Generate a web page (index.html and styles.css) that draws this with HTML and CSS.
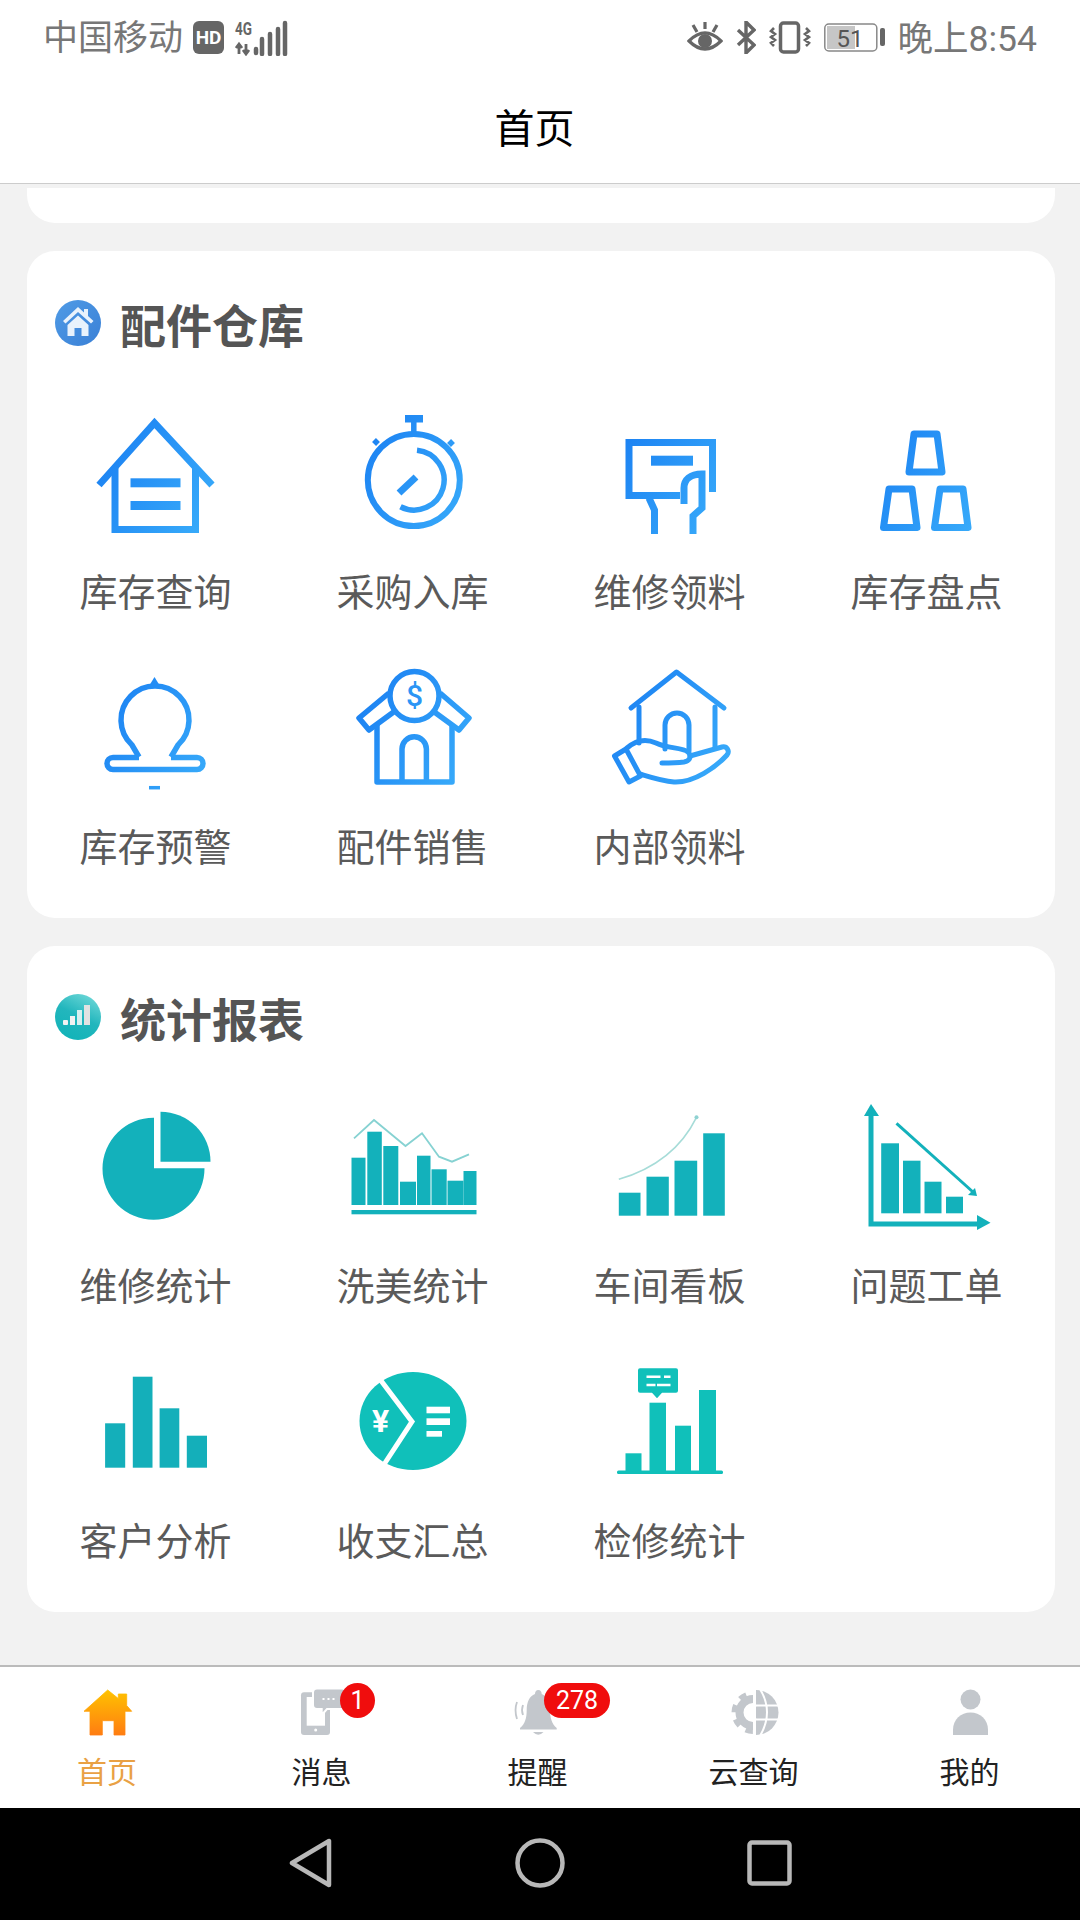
FILE: index.html
```html
<!DOCTYPE html>
<html lang="zh-CN">
<head>
  <meta charset="UTF-8">
  <title>首页</title>
  <link rel="stylesheet" href="styles.css">
</head>
<body>
  <div id="status-bar">
    <div class="status-group">
      <span class="carrier">中国移动</span>
      <span class="hd">HD</span>
      <svg class="signal" width="55" height="36" viewBox="0 0 55 36">
        <text x="1" y="15" class="net-text" textLength="17" lengthAdjust="spacingAndGlyphs">4G</text>
        <path d="M5 34V24M2 28l3-4 3 4M12 24v10M9 30l3 4 3-4" fill="none" stroke="#666" stroke-width="2.800"/>
        <path d="M22 29v4M28 19v15M36 14v20M44 9v25M51 3v31" fill="none" stroke="#666" stroke-width="4.500" stroke-linecap="round"/>
      </svg>
    </div>
    <div class="status-group status-right">
      <svg width="36" height="31" viewBox="0 0 36 31" fill="none" stroke="#666" stroke-width="3.200">
        <path d="M2 19Q18 3 34 19Q18 35 2 19Z"/>
        <circle cx="18" cy="19" r="7" fill="#666" stroke="none"/>
        <path d="M18 0v7M6 3l4 7M30 3l-4 7"/>
      </svg>
      <svg width="20" height="33" viewBox="0 0 20 33" fill="none" stroke="#666" stroke-width="3.400">
        <path d="M2 9L18 24L10 32V1L18 9L2 24"/>
      </svg>
      <svg width="42" height="33" viewBox="0 0 42 33" fill="none" stroke="#666">
        <rect x="11.500" y="2" width="18" height="29" rx="3" stroke-width="3.500"/>
        <path d="M5 7l-3 3 4 3-4 3 4 3-4 3 3 3M37 7l3 3-4 3 4 3-4 3 4 3-3 3" stroke-width="2.600"/>
      </svg>
      <svg width="61" height="30" viewBox="0 0 61 30">
        <rect x="0.800" y="1" width="52" height="27" rx="4" fill="none" stroke="#888" stroke-width="1.500"/>
        <rect x="3" y="3" width="28" height="23" fill="#c6c6c6"/>
        <text x="26" y="23.500" class="battery-text">51</text>
        <rect x="56" y="5" width="5" height="18" rx="2" fill="#666"/>
      </svg>
      <span class="clock">晚上8:54</span>
    </div>
  </div>

  <header id="title-bar">首页</header>

  <main id="content">
    <div class="card card-stub"></div>

    <section class="card">
      <div class="card-head">
        <svg class="head-icon" width="46" height="46" viewBox="0 0 46 46">
          <defs>
            <linearGradient id="blue" gradientUnits="userSpaceOnUse" x1="20" y1="30" x2="140" y2="100">
              <stop offset="0" stop-color="#1a7ff2"/>
              <stop offset="1" stop-color="#38abfa"/>
            </linearGradient>
            <linearGradient id="head-blue" x1="0" y1="0" x2="1" y2="1">
              <stop offset="0" stop-color="#4f9be6"/>
              <stop offset="1" stop-color="#3a80d6"/>
            </linearGradient>
            <linearGradient id="head-teal" x1="0.800" y1="0" x2="0.300" y2="1">
              <stop offset="0" stop-color="#6fd8d8"/>
              <stop offset="0.500" stop-color="#22b6bd"/>
              <stop offset="1" stop-color="#12b3b8"/>
            </linearGradient>
            <linearGradient id="home-orange" x1="0" y1="0" x2="0" y2="1">
              <stop offset="0" stop-color="#ffc200"/>
              <stop offset="1" stop-color="#ff7d12"/>
            </linearGradient>
            <clipPath id="gear-clip"><rect x="0" y="0" width="32" height="60"/></clipPath>
          </defs>
          <ellipse cx="23" cy="23" rx="23" ry="23" fill="url(#head-blue)"/>
          <path d="M23 7L8 21l2.500 2.500L23 12l13 11.500L38.500 21L33 16V9h-4v3.500Z" fill="#e8f2fc"/>
          <path d="M12.500 25L23 15.500L33.500 25V36h-7v-8h-7v8h-7Z" fill="#e8f2fc"/>
        </svg>
        <h2 class="card-title">配件仓库</h2>
      </div>
      <div class="grid">
        <div class="cell">
          <svg class="cell-icon" viewBox="0 0 160 130" fill="none" stroke="url(#blue)" stroke-width="7">
            <path d="M23 75L78.500 13L136 75"/>
            <path d="M39 58V119.500H119.500V58"/>
            <rect x="54.500" y="68.300" width="50" height="9" fill="url(#blue)" stroke="none"/>
            <rect x="54.500" y="91" width="50" height="9" fill="url(#blue)" stroke="none"/>
          </svg>
          <span class="cell-label">库存查询</span>
        </div>
        <div class="cell">
          <svg class="cell-icon" viewBox="0 0 160 130" fill="none" stroke="url(#blue)" stroke-width="6">
            <circle cx="80.800" cy="70" r="46"/>
            <rect x="72" y="5" width="18" height="7.500" fill="url(#blue)" stroke="none"/>
            <path d="M80.800 12v10M41 30l4 4M120 31l-4 4" stroke-width="5.500"/>
            <path d="M84 40.200A30 30 0 1 1 67.500 96.800" stroke-width="5.500"/>
            <path d="M83 67L66 83" stroke-width="7"/>
          </svg>
          <span class="cell-label">采购入库</span>
        </div>
        <div class="cell">
          <svg class="cell-icon" viewBox="0 0 160 130" fill="none" stroke="url(#blue)" stroke-width="7">
            <path d="M90 85.500H39V32.500H122.500V82"/>
            <rect x="61" y="45.700" width="42" height="10" fill="url(#blue)" stroke="none"/>
            <path d="M64.500 124V100L59 88"/>
            <path d="M103 124V106L112 98V64C100 64 94 70 94 78V94"/>
          </svg>
          <span class="cell-label">维修领料</span>
        </div>
        <div class="cell">
          <svg class="cell-icon" viewBox="0 0 160 130" fill="none" stroke="url(#blue)" stroke-width="7" stroke-linejoin="round">
            <path d="M67 24H90L95 62H62Z"/>
            <path d="M42 79H65L70 117.500H36.500Z"/>
            <path d="M93 79H116L121 117.500H87.500Z"/>
          </svg>
          <span class="cell-label">库存盘点</span>
        </div>
        <div class="cell">
          <svg class="cell-icon" viewBox="0 0 160 130" fill="none" stroke="url(#blue)" stroke-width="5.500">
            <path d="M63 92L56 80A34 34 0 1 1 102 80L95 92"/>
            <path d="M63 92.500H37a6 6 0 0 0 0 12H121a6 6 0 0 0 0-12H95"/>
            <path d="M73 21L78.500 12L84 21Z" fill="url(#blue)" stroke="none"/>
            <path d="M73 122.700H84" stroke-width="3.500"/>
          </svg>
          <span class="cell-label">库存预警</span>
        </div>
        <div class="cell">
          <svg class="cell-icon" viewBox="0 0 160 130" fill="none" stroke="url(#blue)" stroke-width="5.500" stroke-linejoin="round">
            <circle cx="81.500" cy="31" r="24.500"/>
            <text x="81.500" y="41" class="dollar-text">$</text>
            <path d="M56 28L26 53L36 65L62 46"/>
            <path d="M107 28L136 53L126 65L100 46"/>
            <path d="M44 60V117H119V60"/>
            <path d="M69 117V84a12.200 12.200 0 0 1 24.400 0V117"/>
          </svg>
          <span class="cell-label">配件销售</span>
        </div>
        <div class="cell">
          <svg class="cell-icon" viewBox="0 0 160 130" fill="none" stroke="url(#blue)" stroke-width="5" stroke-linejoin="round" stroke-linecap="round">
            <path d="M41 43L86.500 7L134 43"/>
            <path d="M49 42V78M125 42V82"/>
            <path d="M75 84V60a12 12 0 0 1 24 0V86"/>
            <path d="M24.500 91L39 117L50.500 111L36 84Z"/>
            <path d="M37 83C45 76 55 73 66 78C78 84 92 82 98 87C102 91 100 96 94 97C86 98 78 98 72 98"/>
            <path d="M100 91L132 82C137 81 140 86 137 90C126 102 104 118 84 117C72 116 60 112 50 109"/>
          </svg>
          <span class="cell-label">内部领料</span>
        </div>
      </div>
    </section>

    <section class="card">
      <div class="card-head card-head-tight">
        <svg class="head-icon" width="46" height="46" viewBox="0 0 46 46">
          <circle cx="23" cy="23" r="23" fill="url(#head-teal)"/>
          <g fill="#f2f2f2">
            <rect x="8" y="26" width="5" height="5" rx="1"/>
            <rect x="15" y="22" width="5" height="9"/>
            <rect x="22" y="16" width="5" height="15" fill="#d8f0f0"/>
            <rect x="29" y="11" width="6" height="20" fill="#e2e2e2"/>
          </g>
        </svg>
        <h2 class="card-title">统计报表</h2>
      </div>
      <div class="grid">
        <div class="cell">
          <svg class="cell-icon" viewBox="0 -1 160 130" fill="#13b1bb">
            <path d="M78 63.300V12.700A51 51 0 1 0 128.500 63.300Z"/>
            <path d="M84.500 56.700V6.700A50 50 0 0 1 134.500 56.700Z"/>
          </svg>
          <span class="cell-label">维修统计</span>
        </div>
        <div class="cell">
          <svg class="cell-icon" viewBox="0 -1 160 130" fill="#13b1bb">
            <rect x="18.500" y="52.700" width="14" height="47.300"/>
            <rect x="34.300" y="26.700" width="14.500" height="73.300"/>
            <rect x="50.300" y="41" width="15" height="59"/>
            <rect x="67" y="76.700" width="16" height="23.300"/>
            <rect x="84" y="50.700" width="13.500" height="49.300"/>
            <rect x="98.500" y="64.300" width="15.200" height="35.700"/>
            <rect x="114.500" y="75.700" width="16" height="24.300"/>
            <rect x="130.500" y="66" width="13" height="34"/>
            <rect x="18.500" y="105" width="125" height="4.300"/>
            <path d="M21 33.300L41 15L72.500 41L89 28.300L106 51.700L119 56.700L136 49.300" fill="none" stroke="#86d2d2" stroke-width="1.800"/>
          </svg>
          <span class="cell-label">洗美统计</span>
        </div>
        <div class="cell">
          <svg class="cell-icon" viewBox="0 -1 160 130" fill="#13b1bb">
            <rect x="28.800" y="87.700" width="21.700" height="23"/>
            <rect x="56.500" y="71.700" width="22.300" height="39"/>
            <rect x="84.500" y="55.700" width="22.700" height="55"/>
            <rect x="113.200" y="28.300" width="21.600" height="82.400"/>
            <path d="M28.800 74.300Q84 58 106.500 12.300" fill="none" stroke="#a6dcd8" stroke-width="1.600"/>
            <circle cx="106.500" cy="12.300" r="2" fill="#8fd2d2"/>
          </svg>
          <span class="cell-label">车间看板</span>
        </div>
        <div class="cell">
          <svg class="cell-icon" viewBox="0 -1 160 130" fill="#13b1bb">
            <path d="M24 9V119H135" fill="none" stroke="#13b1bb" stroke-width="5"/>
            <path d="M24-1L32 11H17Z"/>
            <path d="M143.500 117.700L130 125V110Z"/>
            <rect x="34.200" y="38.300" width="17.800" height="70"/>
            <rect x="56" y="55.700" width="17.500" height="52.600"/>
            <rect x="77.500" y="76.700" width="17" height="31.600"/>
            <rect x="99" y="91.700" width="17" height="16.600"/>
            <path d="M49.500 18.300L126 87" fill="none" stroke="#13b1bb" stroke-width="3"/>
            <path d="M130 91L121 90L128 83Z"/>
          </svg>
          <span class="cell-label">问题工单</span>
        </div>
        <div class="cell">
          <svg class="cell-icon" viewBox="0 -1 160 130" fill="#14afba">
            <rect x="29.100" y="63.300" width="20.100" height="44.400"/>
            <rect x="56.800" y="16.700" width="19.700" height="91"/>
            <rect x="83.600" y="48.300" width="19.700" height="59.400"/>
            <rect x="110.800" y="75.700" width="20.200" height="32"/>
          </svg>
          <span class="cell-label">客户分析</span>
        </div>
        <div class="cell">
          <svg class="cell-icon" viewBox="0 -1 160 130" fill="#10c0ba">
            <ellipse cx="80" cy="61" rx="53.500" ry="49"/>
            <path d="M46 18L79 61.700L50 106" fill="none" stroke="#fff" stroke-width="5"/>
            <text x="47.500" y="72" class="yen-text">¥</text>
            <g fill="#fff">
              <rect x="93.500" y="46.700" width="23.500" height="6.600"/>
              <rect x="93.500" y="58.300" width="23.500" height="6.700"/>
              <rect x="93.500" y="71" width="15.500" height="5.700"/>
            </g>
          </svg>
          <span class="cell-label">收支汇总</span>
        </div>
        <div class="cell">
          <svg class="cell-icon" viewBox="0 -1 160 130" fill="#10c0ba">
            <rect x="35.500" y="93.300" width="16" height="19"/>
            <rect x="59.500" y="42.700" width="16.500" height="69.300"/>
            <rect x="85" y="65.700" width="16" height="46.300"/>
            <rect x="109" y="30" width="17" height="82"/>
            <rect x="27" y="110.500" width="106" height="3.500" rx="1.500"/>
            <path d="M50 8.300H86a2 2 0 0 1 2 2V30.700a2 2 0 0 1-2 2H72L67 38.300L62 32.700H50a2 2 0 0 1-2-2V10.300a2 2 0 0 1 2-2Z"/>
            <path d="M56.500 16.700H70.500M74 16.700H80.500M56.500 25H65.500M67 25H80.500" fill="none" stroke="#fff" stroke-width="2.500"/>
          </svg>
          <span class="cell-label">检修统计</span>
        </div>
      </div>
    </section>
  </main>

  <nav id="tab-bar">
    <div class="tab active">
      <svg class="tab-icon" viewBox="0 0 70 60" fill="url(#home-orange)">
        <path d="M34.700 6L45.300 14.500V10H53.700V21.500L58.700 27.300H52V51H41V36.700H29.300V51H17V27.300H11Z" stroke="url(#home-orange)" stroke-width="0.800" stroke-linejoin="round"/>
      </svg>
      <span class="tab-label">首页</span>
    </div>
    <div class="tab">
      <svg class="tab-icon" viewBox="0 0 70 60" fill="#c3c7cc">
        <rect x="12" y="8.300" width="29" height="42.700" rx="3"/>
        <rect x="17.700" y="13" width="18.300" height="28.700" fill="#fff"/>
        <circle cx="26.700" cy="46" r="1.500" fill="#fff"/>
        <path d="M28 4.500H53a4 4 0 0 1 4 4V21a4 4 0 0 1-4 4H38L32.700 31V25H28a4 4 0 0 1-4-4V8.500a4 4 0 0 1 4-4Z" stroke="#fff" stroke-width="2"/>
        <path d="M33.500 15h2M38.500 15h2M43.500 15h2" stroke="#fff" stroke-width="2"/>
      </svg>
      <span class="tab-label">消息</span>
      <span class="badge">1</span>
    </div>
    <div class="tab">
      <svg class="tab-icon" viewBox="0 0 70 60" fill="#c3c7cc">
        <path d="M33.300 6C31 6 30 8 30 10C24.500 12 21.700 18 21.700 26C21.700 34 20 40 15 44V45.500H51.700V44C47 40 45 34 45 26C45 18 42 12 36.700 10C36.700 8 35.600 6 33.300 6Z"/>
        <path d="M28 48H38.500Q33.300 53.500 28 48Z"/>
        <path d="M12 18Q9 26 12 35M18 21Q16 26 18 31" fill="none" stroke="#c3c7cc" stroke-width="1.800"/>
      </svg>
      <span class="tab-label">提醒</span>
      <span class="badge badge-wide">278</span>
    </div>
    <div class="tab">
      <svg class="tab-icon" viewBox="0 0 70 60" fill="#c3c7cc">
        <g clip-path="url(#gear-clip)" fill="none" stroke="#c3c7cc">
          <circle cx="32" cy="28.500" r="13.500" stroke-width="8"/>
          <circle cx="32" cy="28.500" r="19" stroke-width="5" stroke-dasharray="7.500 7.400"/>
        </g>
        <path d="M35 6A22.500 22.500 0 0 1 35 51Z"/>
        <path d="M35 21.500H58M35 35.500H58M39 5Q53 28 39 52M35 21.500Q27 28 35 35.500" fill="none" stroke="#fff" stroke-width="2"/>
      </svg>
      <span class="tab-label">云查询</span>
    </div>
    <div class="tab">
      <svg class="tab-icon" viewBox="0 0 70 60" fill="#c3c7cc">
        <circle cx="33.500" cy="15.500" r="10"/>
        <path d="M16 51V46C16 35 24 28.500 33.500 28.500C43 28.500 51 35 51 46V51Z"/>
      </svg>
      <span class="tab-label">我的</span>
    </div>
  </nav>

  <div id="nav-bar">
    <svg width="44" height="50" viewBox="0 0 44 50" fill="none" stroke="#b8b8b8" stroke-width="4.500" stroke-linejoin="round">
      <path d="M40 3V47L3 25Z"/>
    </svg>
    <svg width="50" height="50" viewBox="0 0 50 50" fill="none" stroke="#b8b8b8" stroke-width="4.500">
      <circle cx="25" cy="25" r="22.500"/>
    </svg>
    <svg width="45" height="46" viewBox="0 0 45 46" fill="none" stroke="#b8b8b8" stroke-width="4.500">
      <rect x="2.500" y="2.500" width="40" height="41" rx="2.500"/>
    </svg>
  </div>
</body>
</html>
```

FILE: styles.css
```css
body {
  margin: 0;
  width: 1080px;
  height: 1920px;
  display: flex;
  flex-direction: column;
  overflow: hidden;
  background-color: #f2f2f2;
  font-family: Roboto, "Noto Sans CJK SC", sans-serif;
}

#status-bar {
  display: flex;
  justify-content: space-between;
  align-items: center;
  height: 75px;
  padding: 0 43px;
  background-color: #fff;
  color: #777;
  font-size: 35px;
}

.status-group {
  display: flex;
  align-items: center;
  gap: 10px;
}

.status-right {
  gap: 13px;
}

.carrier,
.clock {
  margin-top: 2px;
  line-height: 40px;
}

.clock {
  font-size: 35.500px;
}

.hd {
  width: 31px;
  height: 33px;
  border-radius: 6px;
  background-color: #666;
  color: #fff;
  font-size: 19px;
  font-weight: 700;
  line-height: 33px;
  text-align: center;
}

.net-text {
  font-size: 19px;
  font-weight: 700;
  fill: #666;
}

.battery-text {
  font-size: 24px;
  fill: #555;
  text-anchor: middle;
}

#title-bar {
  height: 108px;
  flex-shrink: 0;
  padding-right: 11px;
  background-color: #fff;
  border-bottom: 1px solid #ccc;
  color: #000;
  font-size: 40px;
  line-height: 110px;
  text-align: center;
}

#content {
  flex: 1;
  display: flex;
  flex-direction: column;
  gap: 28px;
  padding: 4px 25px 0 27px;
}

.card {
  background-color: #fff;
  border-radius: 28px;
}

.card-stub {
  height: 35px;
  border-radius: 0 0 28px 28px;
}

.card-head {
  display: flex;
  align-items: flex-start;
  gap: 19px;
  height: 110px;
  padding: 46px 0 0 28px;
}

.card-head-tight {
  padding-top: 45px;
}

.head-icon {
  margin-top: 3px;
  flex-shrink: 0;
}

.card-title {
  margin: 0;
  color: #555;
  font-size: 46px;
  font-weight: 700;
  line-height: 60px;
}

.grid {
  display: grid;
  grid-template-columns: repeat(4, 257px);
  grid-auto-rows: 255px;
  padding-bottom: 1px;
}

.cell {
  display: flex;
  flex-direction: column;
  align-items: center;
  padding-top: 3px;
}

.cell-icon {
  display: block;
  width: 160px;
  height: 130px;
  overflow: visible;
}

.cell-label {
  margin-top: 28px;
  color: #5a5a5a;
  font-size: 38px;
  line-height: 50px;
}

.dollar-text {
  font-size: 30px;
  font-weight: 500;
  fill: #2b95f5;
  stroke: none;
  text-anchor: middle;
}

.yen-text {
  font-size: 32px;
  font-weight: 700;
  fill: #fff;
  text-anchor: middle;
}

#tab-bar {
  display: flex;
  flex-shrink: 0;
  height: 141px;
  background-color: #fff;
  border-top: 2px solid #bbb;
}

.tab {
  position: relative;
  width: 216px;
  display: flex;
  flex-direction: column;
  align-items: center;
  padding-top: 17px;
}

.tab-icon {
  display: block;
  width: 70px;
  height: 60px;
}

.tab-label {
  margin-top: 9px;
  padding-right: 5px;
  color: #222;
  font-size: 30px;
  line-height: 40px;
}

.tab.active .tab-label {
  padding-right: 2px;
  color: #e9a144;
}

.badge {
  position: absolute;
  top: 16px;
  left: calc(50% + 16px);
  min-width: 35px;
  height: 35px;
  box-sizing: border-box;
  border-radius: 18px;
  background-color: #f00d0d;
  color: #fff;
  font-size: 25px;
  line-height: 35px;
  text-align: center;
}

.badge-wide {
  left: calc(50% + 4px);
  width: 66px;
}

#nav-bar {
  display: flex;
  justify-content: center;
  align-items: center;
  gap: 182px;
  height: 112px;
  flex-shrink: 0;
  padding-bottom: 2px;
  box-sizing: border-box;
  background-color: #000;
}
```
